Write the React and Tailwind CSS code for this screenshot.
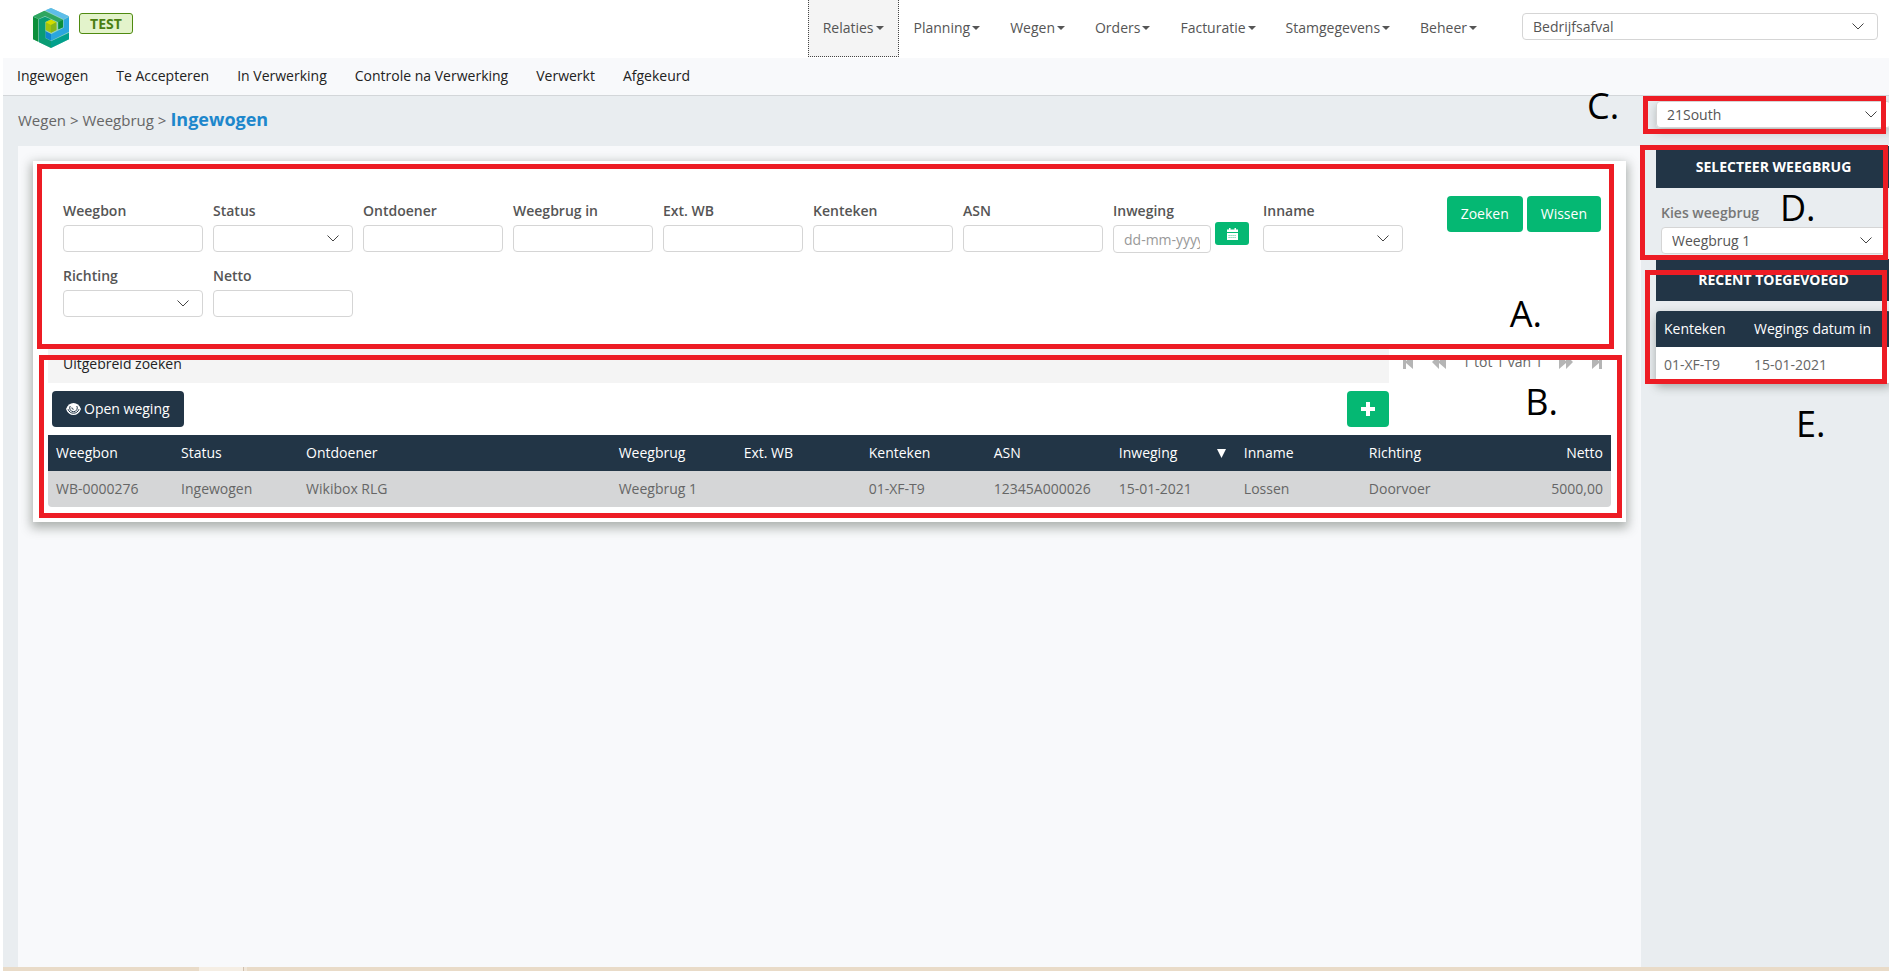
import { useId } from 'react'

const menuItems = ['Relaties', 'Planning', 'Wegen', 'Orders', 'Facturatie', 'Stamgegevens', 'Beheer']

const subItems = [
  'Ingewogen',
  'Te Accepteren',
  'In Verwerking',
  'Controle na Verwerking',
  'Verwerkt',
  'Afgekeurd',
]

const filters = [
  { label: 'Weegbon', type: 'text' },
  { label: 'Status', type: 'select' },
  { label: 'Ontdoener', type: 'text' },
  { label: 'Weegbrug in', type: 'text' },
  { label: 'Ext. WB', type: 'text' },
  { label: 'Kenteken', type: 'text' },
  { label: 'ASN', type: 'text' },
  { label: 'Inweging', type: 'date' },
  { label: 'Inname', type: 'select' },
  { label: 'Richting', type: 'select' },
  { label: 'Netto', type: 'text' },
]

const columns = [
  { key: 'weegbon', label: 'Weegbon', width: 'w-[8%]' },
  { key: 'status', label: 'Status', width: 'w-[8%]' },
  { key: 'ontdoener', label: 'Ontdoener', width: 'w-[20%]' },
  { key: 'weegbrug', label: 'Weegbrug', width: 'w-[8%]' },
  { key: 'extWb', label: 'Ext. WB', width: 'w-[8%]' },
  { key: 'kenteken', label: 'Kenteken', width: 'w-[8%]' },
  { key: 'asn', label: 'ASN', width: 'w-[8%]' },
  { key: 'inweging', label: 'Inweging', width: 'w-[8%]', sorted: true },
  { key: 'inname', label: 'Inname', width: 'w-[8%]' },
  { key: 'richting', label: 'Richting', width: 'w-[8%]' },
  { key: 'netto', label: 'Netto', width: 'w-[8%]', right: true },
]

const rows = [
  {
    weegbon: 'WB-0000276',
    status: 'Ingewogen',
    ontdoener: 'Wikibox RLG',
    weegbrug: 'Weegbrug 1',
    extWb: '',
    kenteken: '01-XF-T9',
    asn: '12345A000026',
    inweging: '15-01-2021',
    inname: 'Lossen',
    richting: 'Doorvoer',
    netto: '5000,00',
  },
]

const Logo = () => (
  <svg className="w-9 h-10" viewBox="0 0 108 120" aria-label="Logo">
    <path d="M54 0 108 25V94L54 120 0 94V25Z" fill="#8fd0c0" />
    <path d="M0 25 34 8 90 35V58L76 64V43L36 24 17 33Z" fill="#2fa660" />
    <path d="M76 43 90 36V58L76 64Z" fill="#0b8f3a" />
    <path d="M0 26 16 33V101L0 94Z" fill="#0b8f3a" />
    <path d="M37 7 54 0 108 25 92 34Z" fill="#5dbdea" />
    <path d="M92 35 108 27V71L54 98V79L92 59Z" fill="#2ba6de" />
    <path d="M37 69 54 78V98L37 89Z" fill="#0f86cf" />
    <path d="M18 34 36 26 54 34 37 42V90L54 99V120L18 103Z" fill="#0a9c74" />
    <path d="M54 100 108 74V94L54 120Z" fill="#02a08c" />
    <path d="M38 43 54 35 70 43V66L54 74 38 66Z" fill="#a2c410" />
    <path d="M38 43 54 35 70 43 54 51Z" fill="#d3dc00" />
    <path d="M54 51 70 43V66L54 74Z" fill="#86b51c" />
  </svg>
)

const EyeIcon = () => (
  <svg className="w-[15px] h-[14px]" viewBox="0 0 15 14" fill="none" aria-hidden="true">
    <path d="M0 7C1.500 3 4.200 1 7.500 1S13.500 3 15 7c-1.500 4-4.200 6-7.500 6S1.500 11 0 7Z" fill="#fff" />
    <path d="M2 7.200C3 9.800 5 11.200 7.500 11.200S12 9.800 13 7.200" stroke="#223546" />
    <path d="M4.200 4a3.800 3.800 0 1 0 6.600 0" stroke="#223546" />
    <path d="M5.800 5.500a1.800 1.800 0 0 0 1.800 1.800" stroke="#223546" />
  </svg>
)

const CalendarIcon = () => (
  <svg className="w-[11px] h-3" viewBox="0 0 11 12" aria-hidden="true">
    <path d="M0 1.500h2V0h1.500v1.500h4V0H9v1.500h2V4H0ZM0 5h11v7H0Z" fill="#fff" />
    <path d="M1.500 7.500h8M1.500 9.500h8" stroke="#05b873" strokeOpacity=".6" strokeDasharray="1.200 .8" />
  </svg>
)

const PlusIcon = () => (
  <svg className="w-[14px] h-[14px]" viewBox="0 0 14 14" aria-hidden="true">
    <path d="M5 0h4v5h5v4H9v5H5V9H0V5h5Z" fill="#fff" />
  </svg>
)

const Select = ({ id, value, className = '', label }) => (
  <div className={`relative ${className}`}>
    <select
      id={id}
      aria-label={label}
      className="block w-full h-[27px] pl-[10px] pr-8 appearance-none rounded border border-[#d5d5d5] bg-white text-sm leading-5 text-[#555]"
    >
      <option>{value}</option>
    </select>
    <svg
      className="absolute right-[14px] top-[10px] w-3 h-[7px] pointer-events-none"
      viewBox="0 0 12 7"
      fill="none"
      stroke="#444"
      aria-hidden="true"
    >
      <path d="m.5.5 5.500 5.500L11.500.5" />
    </svg>
  </div>
)

const Field = ({ label, type }) => {
  const id = useId()

  return (
    <div className="w-[140px]">
      <label htmlFor={id} className="block mb-1 text-sm leading-5 font-semibold text-[#555]">
        {label}
      </label>
      {type === 'text' && (
        <input id={id} type="text" className="block w-full h-[27px] px-[10px] rounded border border-[#d5d5d5] bg-white" />
      )}
      {type === 'select' && <Select id={id} value="" />}
      {type === 'date' && (
        <div className="flex items-start gap-1">
          <input
            id={id}
            type="text"
            placeholder="dd-mm-yyyy"
            className="block w-[98px] h-7 px-[10px] rounded border border-[#d5d5d5] bg-white text-sm placeholder:text-[#999]"
          />
          <button
            type="button"
            aria-label="Kies datum"
            className="flex items-center justify-center w-[34px] h-[23px] -mt-[3px] rounded-[3px] bg-[#05b873]"
          >
            <CalendarIcon />
          </button>
        </div>
      )}
    </div>
  )
}

const Frame = ({ className }) => (
  <div className={`absolute z-10 border-5 border-[#ed1c24] pointer-events-none ${className}`} />
)

const Marker = ({ className, children }) => (
  <span className={`absolute z-10 text-4xl leading-10 text-black pointer-events-none ${className}`}>{children}</span>
)

const Pager = () => (
  <div className="flex items-center justify-between w-[222px] h-[34px] pl-[14px] pr-[9px] text-sm text-[#666]">
    <button type="button" aria-label="Eerste">
      <svg className="w-[10px] h-[14px]" viewBox="0 0 10 14" fill="#b5b5b5">
        <path d="M0 0h3v6l7-6v14L3 8v6H0Z" />
      </svg>
    </button>
    <div className="flex items-center gap-4">
      <button type="button" aria-label="Vorige">
        <svg className="w-[14px] h-[14px]" viewBox="0 0 14 14" fill="#b5b5b5">
          <path d="M7 0v6l7-6v14L7 8v6L0 7Z" />
        </svg>
      </button>
      <span>1 tot 1 van 1</span>
      <button type="button" aria-label="Volgende">
        <svg className="w-[14px] h-[14px]" viewBox="0 0 14 14" fill="#b5b5b5">
          <path d="M7 0v6L0 0v14l7-6v6l7-7Z" />
        </svg>
      </button>
    </div>
    <button type="button" aria-label="Laatste">
      <svg className="w-[10px] h-[14px]" viewBox="0 0 10 14" fill="#b5b5b5">
        <path d="M10 0H7v6L0 0v14l7-6v6h3Z" />
      </svg>
    </button>
  </div>
)

const TopBar = () => (
  <header className="flex items-start h-[58px] pl-[33px] pr-[11px] bg-white">
    <a href="#" className="mt-2">
      <Logo />
    </a>
    <span className="ml-[10px] mt-[13px] w-[54px] h-[21px] rounded-[3px] border border-[#4f8a10] bg-[#e3f3cb] text-center text-sm leading-5 font-bold text-[#4b7f12]">
      TEST
    </span>
    <nav className="flex ml-auto">
      {menuItems.map((item, i) => (
        <a
          key={item}
          href="#"
          className={`flex items-center gap-[2px] h-[57px] px-[14px] text-sm text-[#555] border ${
            i === 0 ? 'bg-[#f4f4f4] border-dotted border-t-0 border-[#444]' : 'border-transparent border-t-0'
          }`}
        >
          {item}
          <svg className="w-2 h-1" viewBox="0 0 8 4" fill="#555" aria-hidden="true">
            <path d="M0 0h8L4 4Z" />
          </svg>
        </a>
      ))}
    </nav>
    <Select label="Afvalstroom" value="Bedrijfsafval" className="ml-[30px] mt-[13px] w-[356px]" />
  </header>
)

const SearchCard = () => (
  <section className="relative px-[15px] pt-10 pb-[15px] bg-white shadow-[0_4px_10px_2px_rgba(60,70,60,0.4)]">
    <form className="flex items-start justify-between px-[15px]">
      <div className="flex flex-1 flex-wrap gap-x-[10px] gap-y-[13px]">
        {filters.map((filter) => (
          <Field key={filter.label} {...filter} />
        ))}
      </div>
      <div className="flex gap-1 -mt-[5px] mr-[-5px]">
        <button type="button" className="h-9 px-[14px] rounded bg-[#05b873] text-sm text-white">
          Zoeken
        </button>
        <button type="button" className="h-9 px-[14px] rounded bg-[#05b873] text-sm text-white">
          Wissen
        </button>
      </div>
    </form>

    <div className="flex mt-7">
      <div className="flex-1 h-[38px] px-[15px] bg-[#f4f4f4] text-sm leading-[38px] text-[#222]">Uitgebreid zoeken</div>
      <Pager />
    </div>

    <div className="flex justify-between my-2 pl-1 mr-[222px]">
      <button type="button" className="flex items-center gap-[3px] h-9 px-[14px] rounded bg-[#223546] text-sm text-white">
        <EyeIcon />
        Open weging
      </button>
      <button
        type="button"
        aria-label="Toevoegen"
        className="flex items-center justify-center w-[42px] h-9 rounded bg-[#05b873]"
      >
        <PlusIcon />
      </button>
    </div>

    <table className="w-full table-fixed text-sm leading-5 text-left">
      <thead className="bg-[#223546] text-white">
        <tr>
          {columns.map((col) => (
            <th key={col.key} className={`h-9 px-2 font-medium ${col.width} ${col.right ? 'text-right' : ''}`}>
              {col.sorted ? (
                <span className="flex items-center justify-between pr-[2px]">
                  {col.label}
                  <svg className="w-[9px] h-[9px]" viewBox="0 0 9 9" fill="#fff" aria-hidden="true">
                    <path d="M0 0h9L4.500 9Z" />
                  </svg>
                </span>
              ) : (
                col.label
              )}
            </th>
          ))}
        </tr>
      </thead>
      <tbody>
        {rows.map((row) => (
          <tr key={row.weegbon} className="text-[#666]">
            {columns.map((col) => (
              <td
                key={col.key}
                className={`h-9 px-2 bg-[#d5d6d7] whitespace-nowrap first:rounded-bl last:rounded-br ${col.right ? 'text-right' : ''}`}
              >
                {row[col.key]}
              </td>
            ))}
          </tr>
        ))}
      </tbody>
    </table>

    <Frame className="left-1 right-3 top-[3px] h-[185px]" />
    <Marker className="right-[84px] top-[133px]">A.</Marker>
    <Frame className="left-[6px] right-1 top-[194px] bottom-1" />
    <Marker className="right-[68px] top-[221px]">B.</Marker>
  </section>
)

const SideTitle = ({ children }) => (
  <h2 className="h-[42px] bg-[#223546] text-center text-sm leading-[42px] font-bold text-white">{children}</h2>
)

const Sidebar = () => (
  <aside className="relative shrink-0 w-[248px] pl-[15px] pt-[5px]">
    {/* the panels run just past the window edge */}
    <div className="w-[235px]">
      <Select label="Vestiging" value="21South" className="rounded shadow-[0_4px_10px_rgba(60,70,60,0.3)]" />

      <div className="mt-[18px]">
        <SideTitle>SELECTEER WEEGBRUG</SideTitle>
        <div className="px-[5px] pt-[15px] pb-[5px]">
          <label htmlFor="weegbrug" className="block mb-1 text-sm leading-5 font-semibold text-[#777]">
            Kies weegbrug
          </label>
          <Select id="weegbrug" value="Weegbrug 1" />
        </div>
      </div>

      <SideTitle>RECENT TOEGEVOEGD</SideTitle>
      <div className="mt-[10px] rounded overflow-hidden shadow-[0_4px_10px_rgba(60,70,60,0.4)]">
        <table className="w-full table-fixed text-sm leading-5 text-left">
          <thead className="bg-[#223546] text-white">
            <tr>
              <th className="w-[90px] h-9 px-2 font-medium">Kenteken</th>
              <th className="h-9 px-2 font-medium">Wegings datum in</th>
            </tr>
          </thead>
          <tbody className="bg-white text-[#666]">
            <tr>
              <td className="h-9 px-2">01-XF-T9</td>
              <td className="h-9 px-2">15-01-2021</td>
            </tr>
          </tbody>
        </table>
      </div>
    </div>

    <Frame className="left-[2px] right-[3px] top-0 h-[38px]" />
    <Marker className="left-[-54px] top-[-10px]">C.</Marker>
    <Frame className="left-[-1px] right-[1px] top-[49px] h-[115px]" />
    <Marker className="left-[139px] top-[92px]">D.</Marker>
    <Frame className="left-1 right-[2px] top-[174px] h-[114px]" />
    <Marker className="left-[155px] top-[308px]">E.</Marker>
  </aside>
)

export default function App() {
  return (
    <div className="flex flex-col min-h-screen overflow-x-clip bg-white font-['Open_Sans',sans-serif]">
      <TopBar />

      <div className="flex flex-1 flex-col ml-[3px] bg-[#e9edf0]">
        <nav className="flex gap-7 h-[38px] pl-[14px] pt-2 bg-[#f8f9fb] border-b border-[#d3d6d9]">
          {subItems.map((item) => (
            <a key={item} href="#" className="text-sm leading-5 text-[#222]">
              {item}
            </a>
          ))}
        </nav>

        <div className="flex flex-1">
          <main className="flex flex-col flex-1 pl-[15px]">
            <div className="flex items-baseline gap-1 h-[50px] pt-[11px] text-[15px] leading-6 text-[#666]">
              <span>Wegen &gt; Weegbrug &gt;</span>
              <h1 className="text-lg leading-6 font-bold text-[#1d87cc]">Ingewogen</h1>
            </div>
            <div className="flex-1 p-[15px] bg-[#f8f9fb]">
              <SearchCard />
            </div>
          </main>
          <Sidebar />
        </div>

        <footer className="flex h-1 bg-[#e9dbc8]">
          <div className="ml-[196px] w-11 bg-[#f5eee4]" />
          <div className="w-px bg-[#d0c0b0]" />
          <div className="w-[3px] bg-[#f0e6d8]" />
        </footer>
      </div>
    </div>
  )
}
